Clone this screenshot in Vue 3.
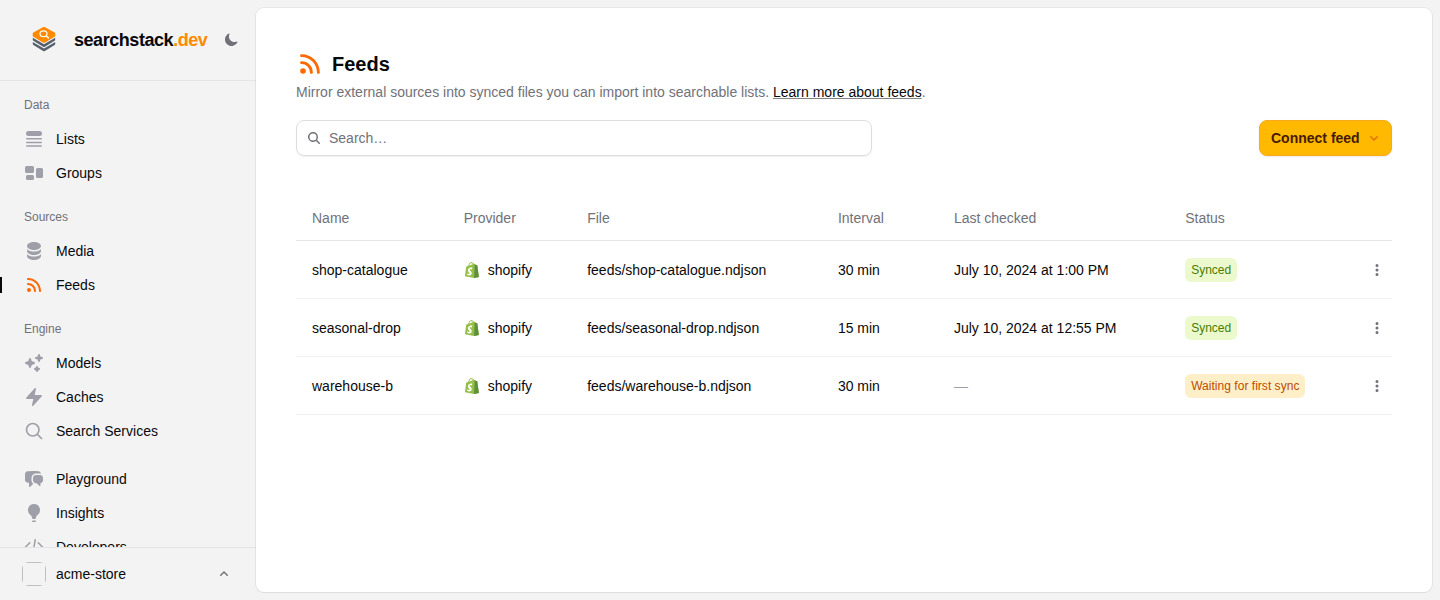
<script setup>
import { h } from 'vue'

const icons = {
  lists: ['M2 4.5A2.5 2.5 0 0 1 4.5 2h11a2.5 2.5 0 0 1 0 5h-11A2.5 2.5 0 0 1 2 4.5ZM2.75 9.083a.75.75 0 0 0 0 1.5h14.5a.75.75 0 0 0 0-1.5H2.75ZM2.75 12.663a.75.75 0 0 0 0 1.5h14.5a.75.75 0 0 0 0-1.5H2.75ZM2.75 16.25a.75.75 0 0 0 0 1.5h14.5a.75.75 0 1 0 0-1.5H2.75Z'],
  groups: ['M2.5 3A1.5 1.5 0 0 0 1 4.5v4A1.5 1.5 0 0 0 2.5 10h6A1.5 1.5 0 0 0 10 8.5v-4A1.5 1.5 0 0 0 8.5 3h-6Zm11 2A1.5 1.5 0 0 0 12 6.5v7a1.5 1.5 0 0 0 1.5 1.5h4a1.5 1.5 0 0 0 1.5-1.5v-7A1.5 1.5 0 0 0 17.5 5h-4Zm-10 7A1.5 1.5 0 0 0 2 13.5v2A1.5 1.5 0 0 0 3.5 17h5a1.5 1.5 0 0 0 1.5-1.5v-2A1.5 1.5 0 0 0 8.5 12h-5Z'],
  media: ['M10 1c3.866 0 7 1.79 7 4s-3.134 4-7 4-7-1.79-7-4 3.134-4 7-4Zm5.694 8.13c.464-.264.91-.583 1.306-.952V10c0 2.21-3.134 4-7 4s-7-1.79-7-4V8.178c.396.37.842.688 1.306.953C5.838 10.006 7.854 10.5 10 10.5s4.162-.494 5.694-1.37ZM3 13.179V15c0 2.21 3.134 4 7 4s7-1.79 7-4v-1.822c-.396.37-.842.688-1.306.953-1.532.875-3.548 1.369-5.694 1.369s-4.162-.494-5.694-1.37A7.009 7.009 0 0 1 3 13.179Z'],
  feeds: ['M3.75 3a.75.75 0 0 0-.75.75v.5c0 .414.336.75.75.75H4c6.075 0 11 4.925 11 11v.25c0 .414.336.75.75.75h.5a.75.75 0 0 0 .75-.75V16C17 8.82 11.18 3 4 3h-.25Z', 'M3 8.75A.75.75 0 0 1 3.75 8H4a8 8 0 0 1 8 8v.25a.75.75 0 0 1-.75.75h-.5a.75.75 0 0 1-.75-.75V16a6 6 0 0 0-6-6h-.25A.75.75 0 0 1 3 9.25v-.5ZM7 15a2 2 0 1 1-4 0 2 2 0 0 1 4 0Z'],
  models: ['M15.98 1.804a1 1 0 0 0-1.96 0l-.24 1.192a1 1 0 0 1-.784.785l-1.192.238a1 1 0 0 0 0 1.962l1.192.238a1 1 0 0 1 .785.785l.238 1.192a1 1 0 0 0 1.962 0l.238-1.192a1 1 0 0 1 .785-.785l1.192-.238a1 1 0 0 0 0-1.962l-1.192-.238a1 1 0 0 1-.785-.785l-.238-1.192ZM6.949 5.684a1 1 0 0 0-1.898 0l-.683 2.051a1 1 0 0 1-.633.633l-2.051.683a1 1 0 0 0 0 1.898l2.051.684a1 1 0 0 1 .633.632l.683 2.051a1 1 0 0 0 1.898 0l.683-2.051a1 1 0 0 1 .633-.633l2.051-.683a1 1 0 0 0 0-1.898l-2.051-.683a1 1 0 0 1-.633-.633L6.95 5.684ZM13.949 13.684a1 1 0 0 0-1.898 0l-.184.551a1 1 0 0 1-.632.633l-.551.183a1 1 0 0 0 0 1.898l.551.183a1 1 0 0 1 .633.633l.183.551a1 1 0 0 0 1.898 0l.184-.551a1 1 0 0 1 .632-.633l.551-.183a1 1 0 0 0 0-1.898l-.551-.184a1 1 0 0 1-.633-.632l-.183-.551Z'],
  caches: ['M11.983 1.907a.75.75 0 0 0-1.292-.657l-8.5 9.5A.75.75 0 0 0 2.75 12h6.572l-1.305 6.093a.75.75 0 0 0 1.292.657l8.5-9.5A.75.75 0 0 0 17.25 8h-6.572l1.305-6.093Z'],
  playground: ['M3.505 2.365A41.369 41.369 0 0 1 9 2c1.863 0 3.697.124 5.495.365 1.247.167 2.18 1.108 2.435 2.268a4.45 4.45 0 0 0-.577-.069 43.141 43.141 0 0 0-4.706 0C9.229 4.696 7.5 6.727 7.5 8.998v2.24c0 1.413.67 2.735 1.76 3.562l-2.98 2.98A.75.75 0 0 1 5 17.25v-3.443c-.501-.048-1-.106-1.495-.172C2.033 13.438 1 12.162 1 10.72V5.28c0-1.441 1.033-2.717 2.505-2.914Z', 'M14 6c-.762 0-1.52.02-2.271.062C10.157 6.148 9 7.472 9 8.998v2.24c0 1.519 1.147 2.839 2.71 2.935.214.013.428.024.642.034.2.009.385.09.518.224l2.35 2.35a.75.75 0 0 0 1.28-.531v-2.07c1.453-.195 2.5-1.463 2.5-2.915V8.998c0-1.526-1.157-2.85-2.729-2.936A41.645 41.645 0 0 0 14 6Z'],
  insights: ['M10 1a6 6 0 0 0-3.815 10.631C7.237 12.5 8 13.443 8 14.456v.644a.75.75 0 0 0 .572.729 6.016 6.016 0 0 0 2.856 0A.75.75 0 0 0 12 15.1v-.644c0-1.013.762-1.957 1.815-2.825A6 6 0 0 0 10 1ZM8.863 17.414a.75.75 0 0 0-.226 1.483 9.066 9.066 0 0 0 2.726 0 .75.75 0 0 0-.226-1.483 7.553 7.553 0 0 1-2.274 0Z'],
  developers: ['M6.28 5.22a.75.75 0 0 1 0 1.06L2.56 10l3.72 3.72a.75.75 0 0 1-1.06 1.06L.97 10.53a.75.75 0 0 1 0-1.06l4.25-4.25a.75.75 0 0 1 1.06 0Zm7.44 0a.75.75 0 0 1 1.06 0l4.25 4.25a.75.75 0 0 1 0 1.06l-4.25 4.25a.75.75 0 0 1-1.06-1.06L17.44 10l-3.72-3.72a.75.75 0 0 1 0-1.06ZM11.377 2.011a.75.75 0 0 1 .612.867l-2.5 14.5a.75.75 0 0 1-1.478-.255l2.5-14.5a.75.75 0 0 1 .866-.612Z'],
  moon: ['M14.438 10.148c.19-.425-.321-.787-.748-.601A5.5 5.5 0 0 1 6.453 2.31c.186-.427-.176-.938-.6-.748a6.501 6.501 0 1 0 8.585 8.586Z'],
  find: ['M9.965 11.026a5 5 0 1 1 1.06-1.06l2.755 2.754a.75.75 0 1 1-1.06 1.06l-2.755-2.754ZM10.5 7a3.5 3.5 0 1 1-7 0 3.5 3.5 0 0 1 7 0Z'],
  down: ['M4.22 6.22a.75.75 0 0 1 1.06 0L8 8.94l2.72-2.72a.75.75 0 1 1 1.06 1.06l-3.25 3.25a.75.75 0 0 1-1.06 0L4.22 7.28a.75.75 0 0 1 0-1.06Z'],
  up: ['M11.78 9.78a.75.75 0 0 1-1.06 0L8 7.06 5.28 9.78a.75.75 0 0 1-1.06-1.06l3.25-3.25a.75.75 0 0 1 1.06 0l3.25 3.25a.75.75 0 0 1 0 1.06Z'],
  dots: ['M8 2a1.5 1.5 0 1 1 0 3 1.5 1.5 0 0 1 0-3ZM8 6.5a1.5 1.5 0 1 1 0 3 1.5 1.5 0 0 1 0-3ZM9.5 12.5a1.5 1.5 0 1 0-3 0 1.5 1.5 0 0 0 3 0Z'],
}

const small = ['moon', 'find', 'down', 'up', 'dots']

const Icon = (props) => {
  if (props.name === 'search') {
    return h('svg', { viewBox: '0 0 24 24', fill: 'none', stroke: 'currentColor', 'stroke-width': 2, 'stroke-linecap': 'round', 'stroke-linejoin': 'round' }, [
      h('path', { d: 'm21 21-5.197-5.197m0 0A7.5 7.5 0 1 0 5.196 5.196a7.5 7.5 0 0 0 10.607 10.607Z' }),
    ])
  }
  const box = small.includes(props.name) ? '0 0 16 16' : '0 0 20 20'
  return h('svg', { viewBox: box, fill: 'currentColor' },
    icons[props.name].map((d) => h('path', { d, 'fill-rule': 'evenodd', 'clip-rule': 'evenodd' })))
}
Icon.props = ['name']

const sections = [
  { title: 'Data', items: [{ label: 'Lists', icon: 'lists' }, { label: 'Groups', icon: 'groups' }] },
  { title: 'Sources', items: [{ label: 'Media', icon: 'media' }, { label: 'Feeds', icon: 'feeds', active: true }] },
  { title: 'Engine', items: [{ label: 'Models', icon: 'models' }, { label: 'Caches', icon: 'caches' }, { label: 'Search Services', icon: 'search' }] },
  { items: [{ label: 'Playground', icon: 'playground' }, { label: 'Insights', icon: 'insights' }, { label: 'Developers', icon: 'developers' }] },
]

const feeds = [
  { name: 'shop-catalogue', interval: '30 min', checked: 'July 10, 2024 at 1:00 PM', status: 'Synced', tone: 'lime' },
  { name: 'seasonal-drop', interval: '15 min', checked: 'July 10, 2024 at 12:55 PM', status: 'Synced', tone: 'lime' },
  { name: 'warehouse-b', interval: '30 min', checked: '', status: 'Waiting for first sync', tone: 'amber' },
]
</script>

<template>
  <div class="shell">
    <aside class="sidebar">
      <header class="brand">
        <svg class="logo" viewBox="0 0 24 26">
          <path d="M.8 16 12 22.500 23.200 16v2.100q0 .700-.600 1l-9.700 5.900q-.900.500-1.800 0L1.400 19.100q-.600-.300-.600-1Z" fill="#56616b" />
          <path d="M.8 11.700 12 18.200l11.200-6.500v2.100q0 .700-.600 1l-9.700 5.900q-.900.500-1.800 0L1.400 14.800q-.600-.300-.600-1Z" fill="#56616b" />
          <path d="M10.800 1.200q1.200-.600 2.400 0l9.400 5.300q.700.400.700 1.200v1.900q0 .800-.700 1.200l-9.400 5.700q-1.200.600-2.400 0l-9.400-5.700q-.700-.400-.700-1.200V7.700q0-.800.700-1.200Z" fill="#ff8a00" />
          <ellipse cx="11.500" cy="7.800" rx="3.500" ry="2.900" fill="none" stroke="#fff" stroke-width="1.200" />
          <path d="m14.200 10 2.200 1.900" stroke="#fff" stroke-width="1.400" stroke-linecap="round" />
        </svg>
        <span class="wordmark">searchstack<b>.dev</b></span>
        <Icon name="moon" class="moon" />
      </header>

      <nav class="nav">
        <section v-for="(s, i) in sections" :key="i" class="group">
          <h3 v-if="s.title">{{ s.title }}</h3>
          <a v-for="item in s.items" :key="item.label" class="item" :class="{ active: item.active }">
            <Icon :name="item.icon" class="ico" />
            <span>{{ item.label }}</span>
          </a>
        </section>
      </nav>

      <footer class="account">
        <span class="avatar"></span>
        <span class="org">acme-store</span>
        <Icon name="up" class="chev" />
      </footer>
    </aside>

    <main class="panel">
      <h1><Icon name="feeds" class="title-ico" />Feeds</h1>
      <p class="lead">Mirror external sources into synced files you can import into searchable lists. <a>Learn more about feeds</a>.</p>

      <div class="toolbar">
        <div class="search"><Icon name="find" class="s16" /><span>Search…</span></div>
        <button class="connect">Connect feed<Icon name="down" class="s16" /></button>
      </div>

      <table>
        <colgroup>
          <col class="c-name" /><col class="c-provider" /><col class="c-file" /><col class="c-interval" /><col class="c-checked" /><col class="c-status" /><col />
        </colgroup>
        <thead>
          <tr><th>Name</th><th>Provider</th><th>File</th><th>Interval</th><th>Last checked</th><th>Status</th><th></th></tr>
        </thead>
        <tbody>
          <tr v-for="f in feeds" :key="f.name">
            <td>{{ f.name }}</td>
            <td>
              <span class="provider">
                <svg class="shopify" viewBox="0 0 256 292">
                  <path d="M223.774 57.340c-.201-1.460-1.480-2.268-2.537-2.357-1.055-.088-23.383-1.743-23.383-1.743s-15.507-15.395-17.209-17.099c-1.703-1.703-5.029-1.185-6.320-.805-.190.056-3.388 1.043-8.678 2.680-5.180-14.906-14.322-28.604-30.405-28.604-.444 0-.901.018-1.358.044C129.310 3.407 123.644.779 118.750.779c-37.465 0-55.364 46.835-60.976 70.635-14.558 4.511-24.900 7.718-26.221 8.133-8.126 2.549-8.383 2.805-9.450 10.462C21.300 95.806.038 260.235.038 260.235l165.678 31.042 89.770-19.420S223.973 58.800 223.775 57.340Z" fill="#95bf46" />
                  <path d="M76 64c9-26 22-46 40-50 7 3 9 13 9 34ZM137 45c0-11-1-19-3-26 9 2 15 11 19 21Z" fill="#fff" />
                  <path d="M221.237 54.983c-1.055-.088-23.383-1.743-23.383-1.743s-15.507-15.395-17.209-17.099c-.637-.634-1.496-.959-2.394-1.099l-12.527 256.233 89.762-19.418S223.972 58.800 223.774 57.340c-.201-1.460-1.480-2.268-2.537-2.357" fill="#5e8e3e" />
                  <path d="m135.242 104.585-11.069 32.926s-9.698-5.176-21.586-5.176c-17.428 0-18.305 10.937-18.305 13.693 0 15.038 39.200 20.800 39.200 56.024 0 27.713-17.577 45.558-41.277 45.558-28.440 0-42.984-17.700-42.984-17.700l7.615-25.160s14.950 12.835 27.565 12.835c8.243 0 11.596-6.490 11.596-11.232 0-19.616-32.160-20.491-32.160-52.724 0-27.129 19.472-53.382 58.778-53.382 15.145 0 22.627 4.338 22.627 4.338" fill="#fff" />
                </svg>
                shopify
              </span>
            </td>
            <td>feeds/{{ f.name }}.ndjson</td>
            <td>{{ f.interval }}</td>
            <td><template v-if="f.checked">{{ f.checked }}</template><span v-else class="none">—</span></td>
            <td><span class="badge" :class="f.tone">{{ f.status }}</span></td>
            <td class="more"><Icon name="dots" class="s16" /></td>
          </tr>
        </tbody>
      </table>
    </main>
  </div>
</template>

<style>
body { background: #f3f3f3; }
</style>

<style scoped>
.shell {
  box-sizing: border-box;
  display: flex;
  height: 600px;
  overflow: hidden;
  padding: 0 8px 0 0;
  background: #f3f3f3;
  color: #09090b;
  font: 14px/24px "Liberation Sans", Arial, sans-serif;
}
svg { display: block; flex: none; }
.sidebar { width: 256px; flex: none; display: flex; flex-direction: column; }
.brand {
  box-sizing: border-box;
  height: 81px;
  flex: none;
  display: flex;
  align-items: center;
  padding: 0 17px 0 32px;
  border-bottom: 1px solid #e5e5e6;
}
.logo { width: 24px; height: 26px; margin-top: -2px; }
.wordmark { margin-left: 18px; font-size: 18px; font-weight: 700; letter-spacing: -0.45px; }
.wordmark b { color: #ff8a00; }
.moon { width: 16px; height: 16px; margin-left: auto; color: #71717a; }
.nav { flex: 1; min-height: 0; overflow: hidden; padding-top: 12px; }
.group { margin-bottom: 15px; }
.group:nth-child(3) { margin-bottom: 14px; }
h3 { margin: 0; padding: 0 24px 5px; font-size: 12px; line-height: 24px; font-weight: 400; color: #71717a; }
.item { display: flex; align-items: center; gap: 12px; height: 34px; padding-left: 24px; }
.ico { width: 20px; height: 20px; color: #9f9fa9; }
.active { background: linear-gradient(#09090b, #09090b) 0 50% / 2px 16px no-repeat; }
.active .ico { color: #ff6900; }
.account {
  box-sizing: border-box;
  height: 53px;
  flex: none;
  display: flex;
  align-items: center;
  padding: 0 24px 0 22px;
  border-top: 1px solid #e5e5e6;
}
.avatar {
  width: 24px;
  height: 24px;
  background:
    linear-gradient(90deg, transparent 3px, #c0c0c0 6px 18px, transparent 21px) top / 100% 1px no-repeat,
    linear-gradient(90deg, transparent 3px, #c0c0c0 6px 18px, transparent 21px) bottom / 100% 1px no-repeat,
    linear-gradient(transparent 3px, #c0c0c0 6px 18px, transparent 21px) left / 1px 100% no-repeat,
    linear-gradient(transparent 3px, #c0c0c0 6px 18px, transparent 21px) right / 1px 100% no-repeat;
}
.org { margin-left: 10px; }
.chev { width: 16px; height: 16px; margin-left: auto; color: #71717a; }
.panel {
  box-sizing: border-box;
  flex: 1;
  min-width: 0;
  margin: 8px 0;
  padding: 40px;
  border-radius: 8px;
  background: #fff;
  box-shadow: 0 0 0 1px rgba(9, 9, 11, 0.05), 0 1px 2px rgba(0, 0, 0, 0.05);
}
h1 { display: flex; align-items: center; gap: 8px; margin: 0; height: 32px; font-size: 20px; font-weight: 700; }
.title-ico { width: 28px; height: 28px; color: #ff6900; }
.lead { margin: 0; color: #71717a; }
.lead a { color: #09090b; text-decoration: underline; text-decoration-color: rgba(9, 9, 11, 0.5); }
.toolbar { display: flex; justify-content: space-between; margin-top: 16px; }
.s16 { width: 16px; height: 16px; }
.search {
  box-sizing: border-box;
  width: 576px;
  height: 36px;
  display: flex;
  align-items: center;
  gap: 7px;
  padding-left: 9px;
  border: 1px solid #dededf;
  border-radius: 8px;
  color: #71717a;
  box-shadow: 0 1px 1px rgba(0, 0, 0, 0.06);
}
.connect {
  box-sizing: border-box;
  width: 133px;
  height: 36px;
  display: flex;
  align-items: center;
  gap: 6px;
  padding: 0 0 0 11px;
  border: 1px solid #fba81a;
  border-radius: 8px;
  background: #ffb900;
  color: #461901;
  font: 700 14px/24px "Liberation Sans", Arial, sans-serif;
  box-shadow: 0 1px 2px rgba(0, 0, 0, 0.08);
}
.connect .s16 { color: #e17100; }
table { width: 1096px; margin-top: 40px; table-layout: fixed; border-collapse: separate; border-spacing: 0; }
.c-name { width: 151.700px; }
.c-provider { width: 123.500px; }
.c-file { width: 250.700px; }
.c-interval { width: 116px; }
.c-checked { width: 231.300px; }
.c-status { width: 160px; }
th, td { padding: 0 0 0 16px; text-align: left; white-space: nowrap; font-weight: 400; }
th { height: 44px; color: #71717a; border-bottom: 1px solid #e5e5e6; }
td { height: 57px; border-bottom: 1px solid #f2f2f2; }
.provider { display: flex; align-items: center; gap: 8px; }
.shopify { width: 16px; height: 16px; }
.none { color: #9f9fa9; }
.badge { display: inline-block; padding: 0 6px; border-radius: 6px; font-size: 12px; line-height: 24px; vertical-align: middle; }
.lime { background: #ebf9cd; color: #497d00; }
.amber { background: #ffefc9; color: #bb4d00; letter-spacing: 0.03px; }
td.more { padding: 0 7px 0 0; color: #71717a; }
.more .s16 { margin-left: auto; }
</style>
